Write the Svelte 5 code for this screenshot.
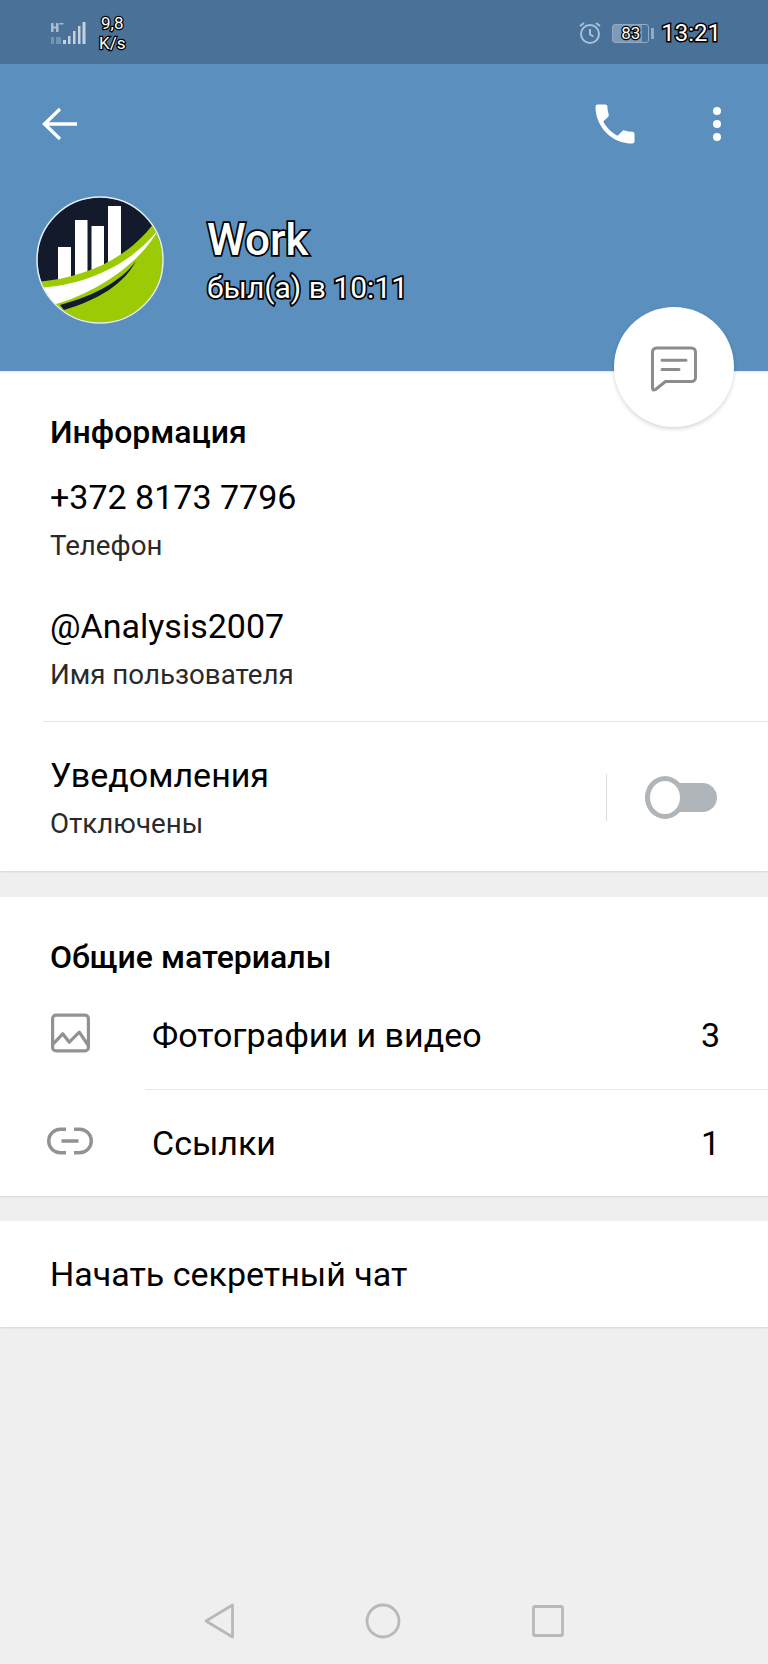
<script>
    const info = [
        { value: '+372 8173 7796', label: 'Телефон' },
        { value: '@Analysis2007', label: 'Имя пользователя' }
    ];
</script>

<div class="page">
    <div class="status">
        <div class="status-left">
            <svg class="signal" width="38" height="24" viewBox="0 0 38 24">
                <g fill="#c4d2df" opacity="0.8">
                    <rect x="2" y="2" width="2.500" height="9" />
                    <rect x="7" y="2" width="2.500" height="9" />
                    <rect x="3" y="5.500" width="5" height="2" />
                    <rect x="10.500" y="2" width="4" height="1.500" />
                </g>
                <g fill="#c4d2df" opacity="0.35">
                    <rect x="2" y="16" width="3" height="7" />
                    <rect x="7" y="16" width="5" height="7" />
                </g>
                <g fill="#c4d2df">
                    <rect x="14" y="19" width="3" height="4" />
                    <rect x="19" y="15" width="2.500" height="8" />
                    <rect x="24" y="10" width="2.500" height="13" />
                    <rect x="29" y="5" width="2.500" height="18" />
                    <rect x="33.500" y="1" width="3" height="22" />
                </g>
            </svg>
            <div class="speed">9,8<br />K/s</div>
        </div>
        <div class="status-right">
            <svg width="24" height="24" viewBox="0 0 24 24" fill="none" stroke="#a9c1d8" stroke-width="2">
                <circle cx="12" cy="13" r="9" />
                <path d="M12 8v5.500l3.500 2M2 5l4-3M22 5l-4-3" />
            </svg>
            <div class="battery"><span class="battery-num">83</span></div>
            <span class="clock">13:21</span>
        </div>
    </div>

    <header class="header">
        <div class="toolbar">
            <svg width="38" height="38" viewBox="0 0 38 38" fill="none" stroke="#fff" stroke-width="3.400">
                <path d="M37 19H5M20 4L4.500 19 20 34" />
            </svg>
            <div class="toolbar-right">
                <svg width="52" height="52" viewBox="0 0 24 24" fill="#fff">
                    <path d="M6.600 10.800c1.400 2.800 3.800 5.100 6.600 6.600l2.200-2.200c.3-.3.700-.4 1-.2 1.100.4 2.300.6 3.600.6.600 0 1 .4 1 1V20c0 .6-.4 1-1 1C10.600 21 3 13.400 3 4c0-.6.400-1 1-1h3.500c.6 0 1 .4 1 1 0 1.300.2 2.500.6 3.600.1.300 0 .7-.2 1z" />
                </svg>
                <div class="dots"><i></i><i></i><i></i></div>
            </div>
        </div>
        <div class="profile">
            <svg class="avatar" width="128" height="128" viewBox="0 0 128 128">
                <defs><clipPath id="round"><circle cx="64" cy="64" r="62.500" /></clipPath></defs>
                <g clip-path="url(#round)">
                    <rect width="128" height="128" fill="#131a2c" />
                    <rect x="22" y="51" width="13" height="40" fill="#fff" />
                    <rect x="39" y="24" width="12.500" height="62" fill="#fff" />
                    <rect x="55.500" y="30" width="12.500" height="55" fill="#fff" />
                    <rect x="72" y="10" width="13" height="64" fill="#fff" />
                    <path d="M0 86C50 82 92 62 118 27L128 32V128H0Z" fill="#9ccb05" />
                    <path d="M0 92C50 90 95 68 122 34 105 66 62 96 20 108 10 106 4 100 0 92Z" fill="#fff" />
                    <path d="M24 109C60 99 85 85 100 65 88 88 62 104 28 114Z" fill="#131a2c" />
                </g>
                <circle cx="64" cy="64" r="63" fill="none" stroke="#fff" stroke-opacity="0.85" stroke-width="1.500" />
            </svg>
            <div class="profile-text">
                <div class="name">Work</div>
                <div class="seen">был(а) в 10:11</div>
            </div>
        </div>
        <button class="fab" aria-label="Сообщение">
            <svg class="fab-icon" width="48" height="48" viewBox="0 0 48 48" fill="none" stroke="#8a8c8e" stroke-width="3" stroke-linejoin="round" stroke-linecap="round">
                <path d="M2.500 9a4 4 0 0 1 4-4h35a4 4 0 0 1 4 4v25.500a4 4 0 0 1-4 4H15.500L5.500 46.500Q2.500 48 2.500 45Z" />
                <path d="M12 17.200H36M12 26.500H29" />
            </svg>
        </button>
    </header>

    <section class="card info">
        <h2>Информация</h2>
        {#each info as row}
            <div class="info-row">
                <div class="big">{row.value}</div>
                <div class="small">{row.label}</div>
            </div>
        {/each}
        <div class="notify">
            <div>
                <div class="big">Уведомления</div>
                <div class="small">Отключены</div>
            </div>
            <div class="notify-side">
                <span class="vline"></span>
                <span class="switch"><span class="knob"></span></span>
            </div>
        </div>
    </section>

    <section class="card shared">
        <h2>Общие материалы</h2>
        <div class="media-row first">
            <svg class="media-icon" width="46" height="46" viewBox="0 0 46 46" fill="none" stroke="#8f9396" stroke-width="3.200" stroke-linejoin="round">
                <rect x="5.600" y="5.100" width="35.800" height="35.800" rx="3.500" />
                <path d="M6.300 33.800L15.700 23.800 22.300 32.200 32.300 22.200 41.300 35.500" />
            </svg>
            <div class="media-body"><span>Фотографии и видео</span><span>3</span></div>
        </div>
        <div class="media-row second">
            <svg class="media-icon" width="46" height="46" viewBox="0 0 46 46" fill="none" stroke="#8f9396" stroke-width="3.400">
                <path d="M19 11.200H13.500a11.800 11.800 0 0 0 0 23.600H19M27 11.200h5.500a11.800 11.800 0 0 1 0 23.600H27M14.500 23H31.500" />
            </svg>
            <div class="media-body"><span>Ссылки</span><span>1</span></div>
        </div>
    </section>

    <section class="card secret">Начать секретный чат</section>

    <nav class="navbar">
        <svg width="30" height="36" viewBox="0 0 30 36" fill="none" stroke="#b9b9b9" stroke-width="2.800" stroke-linejoin="round">
            <path d="M2 18L28.500 2v32Z" />
        </svg>
        <svg width="36" height="36" viewBox="0 0 36 36" fill="none" stroke="#b9b9b9" stroke-width="2.800">
            <circle cx="18" cy="18" r="16" />
        </svg>
        <svg width="32" height="32" viewBox="0 0 32 32" fill="none" stroke="#b9b9b9" stroke-width="2.800" stroke-linejoin="round">
            <rect x="1.500" y="1.500" width="29" height="29" rx="1.500" />
        </svg>
    </nav>
</div>

<style>
    :global(body) {
        margin: 0;
        background: #efefef;
    }

    .page {
        width: 768px;
        height: 1664px;
        display: flex;
        flex-direction: column;
        font-family: Roboto, "Noto Sans", sans-serif;
        color: #000;
        overflow: hidden;
    }

    .status {
        height: 64px;
        background: #4a7299;
        display: flex;
        justify-content: space-between;
        align-items: center;
        padding: 0 47px 0 49px;
        flex: none;
    }

    .status-left, .status-right {
        display: flex;
        align-items: center;
    }

    .status-left {
        margin-top: 1px;
    }

    .signal {
        margin-right: 12px;
    }

    .speed {
        color: #fff;
        font-size: 17px;
        line-height: 20px;
        text-align: center;
        -webkit-text-stroke: 2.500px #000;
        paint-order: stroke fill;
    }

    .status-right {
        margin-top: 2px;
    }

    .battery {
        width: 35px;
        height: 17px;
        margin-left: 10px;
        border: 1px solid #8fabc6;
        border-radius: 3px;
        background: linear-gradient(90deg, #7d9ab8 0, #7d9ab8 82%, transparent 82%);
        display: flex;
        align-items: center;
        justify-content: center;
        position: relative;
        font-size: 17px;
        color: #fff;
        -webkit-text-stroke: 2.500px #000;
        paint-order: stroke fill;
    }

    .battery::after {
        content: "";
        position: absolute;
        right: -6px;
        top: 3px;
        width: 3px;
        height: 11px;
        background: #8fabc6;
    }

    .clock {
        color: #fff;
        font-size: 24px;
        margin-left: 12px;
        -webkit-text-stroke: 3px #000;
        paint-order: stroke fill;
    }

    .header {
        height: 307px;
        background: #5a8fbe;
        position: relative;
        flex: none;
        box-shadow: 0 1px 2px rgba(0, 0, 0, 0.12);
        z-index: 1;
    }

    .toolbar {
        display: flex;
        justify-content: space-between;
        align-items: center;
        height: 120px;
        padding: 0 47px 0 40px;
    }

    .toolbar-right {
        display: flex;
        align-items: center;
        gap: 72px;
    }

    .dots {
        display: flex;
        flex-direction: column;
        gap: 4.500px;
    }

    .dots i {
        width: 8.500px;
        height: 8.500px;
        border-radius: 50%;
        background: #fff;
    }

    .profile {
        display: flex;
        align-items: center;
        padding: 12px 0 0 36px;
    }

    .profile-text {
        margin-left: 43px;
        margin-top: 8px;
    }

    .name, .seen {
        color: #fff;
        -webkit-text-stroke: 3.500px #000;
        paint-order: stroke fill;
    }

    .name {
        font-size: 44px;
        font-weight: 500;
        line-height: 48px;
    }

    .seen {
        font-size: 30px;
        line-height: 48px;
    }

    .fab {
        position: absolute;
        right: 34px;
        bottom: -56px;
        width: 120px;
        height: 120px;
        border: 0;
        padding: 0;
        border-radius: 50%;
        background: #fff;
        box-shadow: 0 2px 4px rgba(0, 0, 0, 0.16);
        display: flex;
        align-items: center;
        justify-content: center;
    }

    .fab-icon {
        overflow: visible;
    }

    .card {
        background: #fff;
        flex: none;
        box-shadow: 0 1px 2px rgba(0, 0, 0, 0.1);
    }

    h2 {
        margin: 0;
        font-size: 32px;
        font-weight: 500;
        line-height: 36px;
    }

    .info {
        height: 500px;
        padding: 43px 0 0 50px;
        box-sizing: border-box;
    }

    .big {
        font-size: 34px;
        line-height: 40px;
    }

    .small {
        font-size: 27.700px;
        line-height: 30px;
        color: #2a2a2a;
        margin-top: 14px;
    }

    .info-row {
        height: 129px;
        padding-top: 27px;
        box-sizing: border-box;
    }

    .notify {
        margin: 13px 0 0 -7px;
        padding: 33px 0 0 7px;
        border-top: 1px solid #e4e4e4;
        display: flex;
        justify-content: space-between;
    }

    .notify-side {
        display: flex;
        align-items: center;
        padding-right: 51px;
        gap: 38px;
    }

    .vline {
        width: 1px;
        height: 47px;
        background: #dcdcdc;
    }

    .switch {
        width: 72px;
        height: 29px;
        border-radius: 15px;
        background: #b0b5b9;
        position: relative;
        display: block;
    }

    .knob {
        position: absolute;
        left: 0;
        top: -7px;
        width: 30px;
        height: 33px;
        border: 5px solid #b0b5b9;
        border-radius: 50%;
        background: #fff;
    }

    .shared {
        margin-top: 26px;
        height: 299px;
        padding-top: 42px;
        box-sizing: border-box;
    }

    .shared h2 {
        padding-left: 50px;
    }

    .media-row {
        display: flex;
        align-items: center;
    }

    .media-row.first {
        height: 114px;
    }

    .media-row.first .media-body {
        padding-top: 6px;
    }

    .media-row.first .media-icon {
        margin-top: 2px;
    }

    .media-row.second {
        height: 107px;
        position: relative;
    }

    .media-row.second::before {
        content: "";
        position: absolute;
        left: 145px;
        right: 0;
        top: 0;
        height: 1px;
        background: #e8e8e8;
    }

    .media-row.second .media-icon {
        margin-top: -4px;
    }

    .media-icon {
        margin-left: 47px;
        flex: none;
    }

    .media-body {
        margin-left: 59px;
        flex: 1;
        display: flex;
        justify-content: space-between;
        font-size: 34px;
        padding-right: 48px;
    }

    .secret {
        margin-top: 25px;
        height: 106px;
        display: flex;
        align-items: center;
        padding-left: 50px;
        font-size: 34px;
    }

    .navbar {
        margin-top: auto;
        height: 87px;
        display: flex;
        align-items: center;
        justify-content: center;
        gap: 131px;
        flex: none;
    }
</style>
